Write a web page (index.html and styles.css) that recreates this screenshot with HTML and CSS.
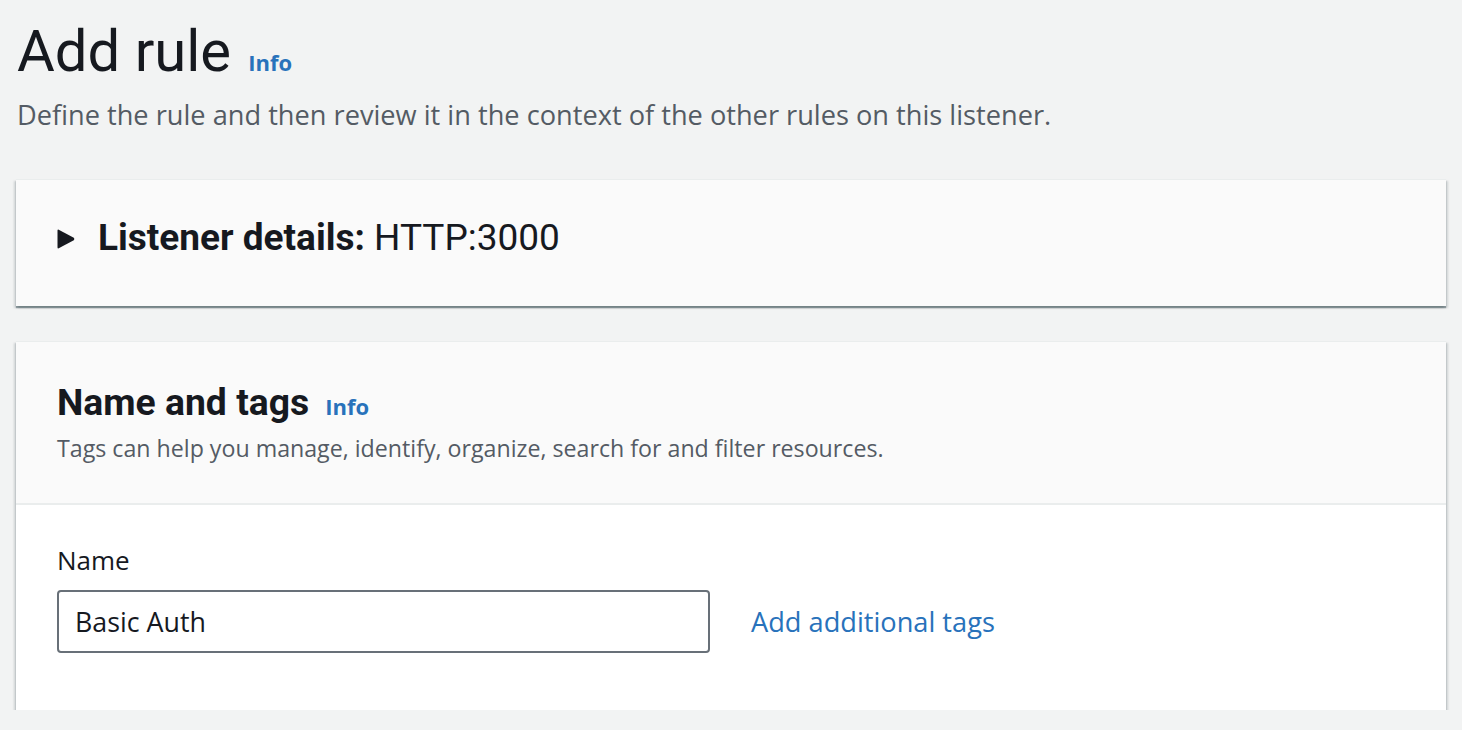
FILE: index.html
```html
<!DOCTYPE html>
<html lang="en">
<head>
<meta charset="utf-8">
<title>Add rule</title>
<link rel="stylesheet" href="styles.css">
</head>
<body>
<div class="page">
  <header class="page-header">
    <div class="title-row">
      <h1 class="title">Add rule</h1>
      <a class="info" href="#">Info</a>
    </div>
    <p class="page-desc">Define the rule and then review it in the context of the other rules on this listener.</p>
  </header>

  <section class="card">
    <div class="expander">
      <svg class="caret" width="18" height="20" viewBox="0 0 18 20" aria-hidden="true">
        <path d="M0.5 1.8 Q0.5 0 2.2 0.9 L16.8 8.8 Q18 10 16.8 11.2 L2.2 19.1 Q0.5 20 0.5 18.2 Z" fill="#16191f"/>
      </svg>
      <h2 class="expander-title"><span class="strong">Listener details:</span> HTTP:3000</h2>
    </div>
  </section>

  <section class="card card-form">
    <div class="card-header">
      <div class="title-row">
        <h2 class="card-title">Name and tags</h2>
        <a class="info" href="#">Info</a>
      </div>
      <p class="card-desc">Tags can help you manage, identify, organize, search for and filter resources.</p>
    </div>
    <div class="card-body">
      <label class="field-label" for="name">Name</label>
      <div class="field-row">
        <input id="name" class="text-input" type="text" value="Basic Auth">
        <a class="link" href="#">Add additional tags</a>
      </div>
    </div>
  </section>
</div>
</body>
</html>
```

FILE: styles.css
```css
* { box-sizing: border-box; }
html, body { margin: 0; padding: 0; }
body {
  background: #f2f3f3;
  color: #16191f;
  font-family: "Open Sans", "Noto Sans", sans-serif;
}
.page {
  padding: 0 16px;
}
.page-header {
  padding-left: 1px;
}
.title-row {
  display: flex;
  align-items: baseline;
  gap: 17px;
}
.title {
  margin: 0;
  font-family: Roboto, "Open Sans", sans-serif;
  font-size: 58px;
  font-weight: 400;
  line-height: 68px;
  padding-top: 17px;
}
.info {
  color: #2872bb;
  font-weight: 700;
  font-size: 22px;
  text-decoration: none;
}
.page-desc {
  margin: 12px 0 0;
  font-size: 27.2px;
  line-height: 36px;
  color: #545b64;
}
.card {
  background: #fafafa;
  border-top: 1px solid #eaeded;
  box-shadow: 0 2px 1px 0 rgba(0, 28, 36, 0.35), 2px 2px 2px 0 rgba(0, 28, 36, 0.15), -2px 2px 2px 0 rgba(0, 28, 36, 0.15);
  margin-top: 46px;
}
.expander {
  height: 126px;
  display: flex;
  align-items: flex-start;
  padding: 36px 0 0 41px;
  gap: 23px;
}
.caret { display: block; margin-top: 13px; }
.expander-title {
  margin: 0;
  font-family: Roboto, "Open Sans", sans-serif;
  font-size: 37px;
  line-height: 44px;
  font-weight: 400;
}
.strong { font-weight: 700; }
.card-form { margin-top: 35px; }
.card-header {
  padding: 38px 40px 0 41px;
  height: 163px;
  border-bottom: 2px solid #eaeded;
}
.card-title {
  margin: 0;
  font-family: Roboto, "Open Sans", sans-serif;
  font-size: 37.3px;
  line-height: 44px;
  font-weight: 700;
}
.card-header .title-row { gap: 16px; }
.card-desc {
  margin: 8px 0 0;
  font-size: 23.2px;
  line-height: 32px;
  color: #545b64;
}
.card-body {
  background: #fff;
  padding: 38px 40px 57px 41px;
}
.field-label {
  display: block;
  font-size: 26px;
  line-height: 34px;
}
.field-row {
  display: flex;
  align-items: center;
  gap: 41px;
  margin-top: 13px;
}
.text-input {
  width: 653px;
  height: 63px;
  border: 2px solid #687078;
  border-radius: 4px;
  padding: 0 16px;
  font-family: inherit;
  font-size: 26.8px;
  color: #16191f;
  background: #fff;
}
.link {
  color: #2872bb;
  font-size: 27.2px;
  text-decoration: none;
}
```
